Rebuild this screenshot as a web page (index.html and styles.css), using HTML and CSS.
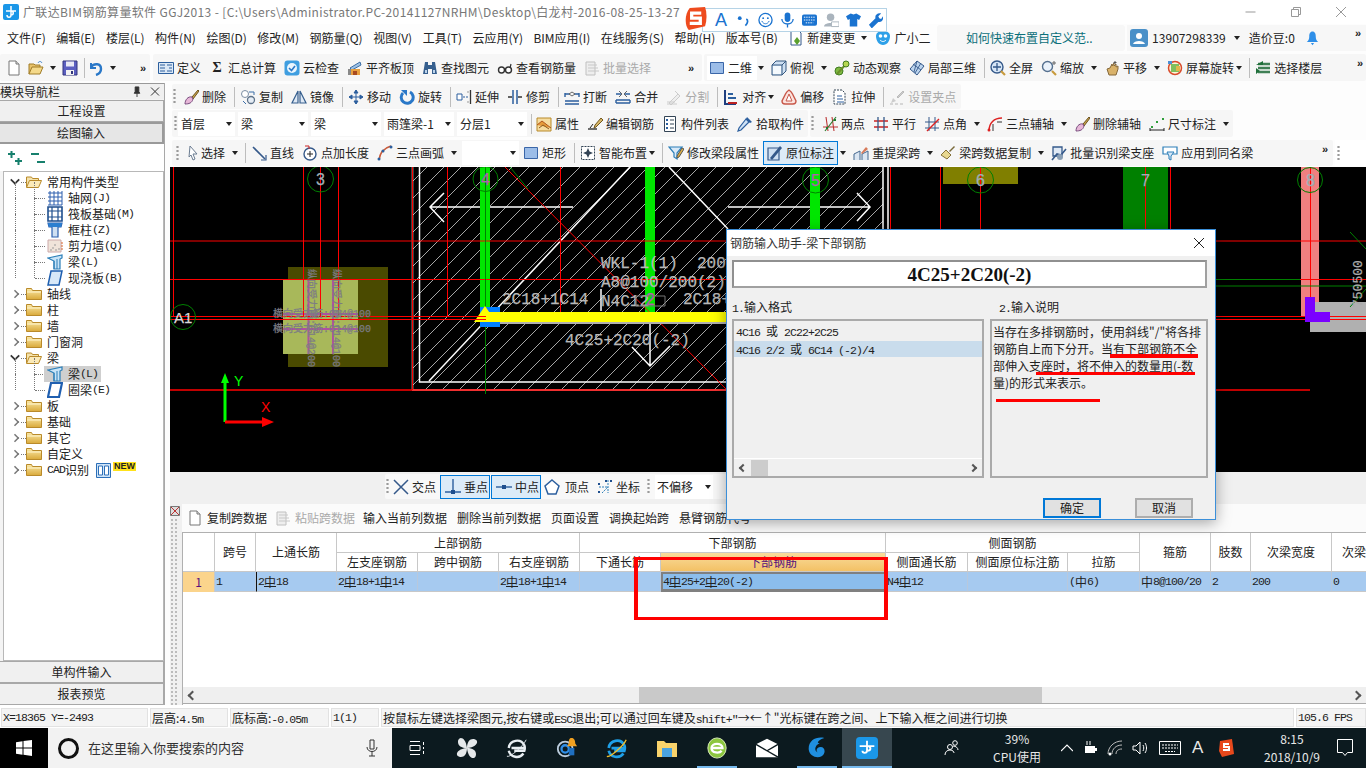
FILE: index.html
```html
<!DOCTYPE html>
<html lang="zh-CN">
<head>
<meta charset="utf-8">
<title>广联达BIM钢筋算量软件 GGJ2013</title>
<link rel="stylesheet" href="styles.css">
</head>
<body>
<svg class="defs" width="0" height="0">
<defs>
<linearGradient id="fg" x1="0" y1="0" x2="0" y2="1"><stop offset="0" stop-color="#fbe9a8"/><stop offset="1" stop-color="#d9a93a"/></linearGradient>
<pattern id="hatch" width="17" height="17" patternUnits="userSpaceOnUse"><path d="M-1 18L18 -1" stroke="#cfcfcf" stroke-width=".8"/><path d="M-1 1L1 -1M16 18L18 16" stroke="#cfcfcf" stroke-width=".8"/></pattern>
<symbol id="new" viewBox="0 0 16 16"><path d="M3 1h7l3 3v11H3z" fill="#fff" stroke="#777"/><path d="M10 1v3h3" fill="#ddd" stroke="#777"/></symbol>
<symbol id="open" viewBox="0 0 16 16"><path d="M1 14V4h5l1 1h5v2" fill="#e8c26a" stroke="#a07c28"/><path d="M1 14l3-7h11l-3 7z" fill="#f4d98a" stroke="#a07c28"/><path d="M10 3c1-2 3-2 4 0" fill="none" stroke="#3a80c8"/></symbol>
<symbol id="save" viewBox="0 0 16 16"><path d="M1 1h14v14H1z" fill="#5b5fc0" stroke="#33357c"/><path d="M4 1.500h8v5H4z" fill="#e8e8f4"/><path d="M4 10h8v5H4z" fill="#f2f2f2"/><path d="M9 11h2v3H9z" fill="#33357c"/></symbol>
<symbol id="undo" viewBox="0 0 16 16"><path d="M3 3v5h5" fill="none" stroke="#2a78c8" stroke-width="2"/><path d="M3 7c3-4 10-4 10 2 0 3-2 5-5 6" fill="none" stroke="#2a78c8" stroke-width="2.400"/></symbol>
<symbol id="def" viewBox="0 0 16 16"><path d="M.5 2.500h15v11H.5z" fill="#dbe8f6" stroke="#2c5f9e"/><path d="M2 5h5M2 8h5M2 11h5M9 5h5M11 8h3M9 11h5" stroke="#2c5f9e"/></symbol>
<symbol id="cloud" viewBox="0 0 16 16"><rect x=".5" y=".5" width="15" height="15" rx="3" fill="#3f9ee0"/><circle cx="8" cy="8" r="5" fill="#eaf5fd"/><path d="M5 8l2.500 2.500L11 6" fill="none" stroke="#2a78c8" stroke-width="1.600"/></symbol>
<symbol id="roof" viewBox="0 0 16 16"><path d="M3 8l10-6 1 3-9 5z" fill="#9fc2e4" stroke="#3a6da6"/><path d="M3 9h10v6H3z" fill="#e8a040"/><path d="M6 11h4v4H6z" fill="#a84a20"/><path d="M1 9h3v6H1z" fill="#888"/></symbol>
<symbol id="binoc" viewBox="0 0 16 16"><path d="M3 2h3v3h4V2h3l2 12h-5V9H6v5H1z" fill="#365f8e"/><path d="M3 10h2v3H3zM11 10h2v3h-2z" fill="#bcd3ea"/></symbol>
<symbol id="glass" viewBox="0 0 16 16"><circle cx="4.500" cy="10" r="3" fill="#fff" stroke="#333" stroke-width="1.400"/><circle cx="11.500" cy="10" r="3" fill="#fff" stroke="#333" stroke-width="1.400"/><path d="M7.500 10h1M13 8l1-4" stroke="#333" stroke-width="1.200"/></symbol>
<symbol id="batch" viewBox="0 0 16 16"><path d="M2 2h9v13H2z" fill="#eee" stroke="#c0c0c0"/><path d="M4 5h9M4 8h10M4 11h11" stroke="#c8c8c8"/></symbol>
<symbol id="rect" viewBox="0 0 16 16"><path d="M1.500 2.500h13v11h-13z" fill="#9cbde8" stroke="#3a66a8"/></symbol>
<symbol id="cube" viewBox="0 0 16 16"><path d="M1 5l4-4h10v10l-4 4H1z" fill="#cfe0f2" stroke="#33577f"/><path d="M1 5h10v10M11 5l4-4" fill="none" stroke="#33577f"/><path d="M2 6h8v8H2z" fill="#f4f9fd"/></symbol>
<symbol id="orbit" viewBox="0 0 16 16"><circle cx="5" cy="11" r="4" fill="#7fb842" stroke="#3f7b20"/><path d="M3 14L13 3" stroke="#6a8f2a" stroke-width="2"/><circle cx="12" cy="4" r="3" fill="#b6d651" stroke="#3f7b20"/></symbol>
<symbol id="part" viewBox="0 0 16 16"><path d="M8 1l7 5-7 9-7-6z" fill="#bcd4ee" stroke="#35598a"/><path d="M4 4l8 6M8 1l-3 11M12 3l-6 10" stroke="#35598a" stroke-width=".9"/></symbol>
<symbol id="full" viewBox="0 0 16 16"><circle cx="7" cy="7" r="6" fill="#d7e6f6" stroke="#35598a" stroke-width="1.400"/><path d="M7 3v8M3 7h8" stroke="#35598a" stroke-width="1.300"/><path d="M11 11l4 4" stroke="#c79a3c" stroke-width="2.200"/></symbol>
<symbol id="zoom" viewBox="0 0 16 16"><circle cx="6.500" cy="6.500" r="5" fill="#eaf2fb" stroke="#55708f" stroke-width="1.400"/><path d="M11 11l4 4" stroke="#c79a3c" stroke-width="2.200"/><path d="M13 1v4M11 3h4" stroke="#666"/></symbol>
<symbol id="hand" viewBox="0 0 16 16"><path d="M3 9l2 6h7l2-6V6l-2 1V4l-2 2V3L8 6V4L6 8z" fill="#d9b26a" stroke="#85683a"/><path d="M11 1v3M9.500 2.500h3" stroke="#555"/></symbol>
<symbol id="rot" viewBox="0 0 16 16"><circle cx="8" cy="8" r="6.500" fill="#fff6d8" stroke="#d84a2a" stroke-width="1.500"/><path d="M4 4h8v8H4z" fill="#7fbf5f"/><path d="M9 6h4v5H9z" fill="#e0b84c"/><path d="M1 1h4v3H1z" fill="#4a90d6"/></symbol>
<symbol id="floors" viewBox="0 0 16 16"><path d="M3 4h12M3 8h12M3 12h12" stroke="#3f7f55" stroke-width="2.400"/><path d="M8 1L1 5h7zM1 8v6l4-3z" fill="#1f6f3a"/></symbol>
<symbol id="erase" viewBox="0 0 16 16"><path d="M9 8l6-7 1 1-6 8z" fill="#c9a24a" stroke="#6b5320"/><path d="M2 15c0-4 3-8 7-7l1 2c-1 4-4 5-8 5z" fill="#e7b7d8" stroke="#7a4f80"/></symbol>
<symbol id="copy" viewBox="0 0 16 16"><circle cx="5" cy="5" r="3.500" fill="#fff" stroke="#7c8ea3"/><circle cx="11" cy="11" r="3.500" fill="#e6edf5" stroke="#5d7289" stroke-width="1.300"/><path d="M3 12l3 3M9 3h5v3" fill="none" stroke="#3b6ea8"/></symbol>
<symbol id="mirror" viewBox="0 0 16 16"><path d="M7 2L1 14h6zM9 2l6 12H9z" fill="#dfe9f5" stroke="#375f8e" stroke-width="1.200"/></symbol>
<symbol id="move" viewBox="0 0 16 16"><path d="M8 1v14M1 8h14M8 1L6 4h4zM8 15l-2-3h4zM1 8l3-2v4zM15 8l-3-2v4z" fill="#2c5f9e" stroke="#2c5f9e"/></symbol>
<symbol id="rotb" viewBox="0 0 16 16"><path d="M4 4a6 6 0 1 0 7-1" fill="none" stroke="#2a78c8" stroke-width="3"/><path d="M2 1h6v6z" fill="#2a78c8"/></symbol>
<symbol id="extend" viewBox="0 0 16 16"><path d="M14.500 1v14" stroke="#333" stroke-width="1.300"/><path d="M1 5h5v6H1z" fill="#fff" stroke="#2c5f9e"/><path d="M7 8h6" stroke="#2c5f9e" stroke-dasharray="2 1"/><path d="M11 3h2M11 13h2" stroke="#999"/></symbol>
<symbol id="trim" viewBox="0 0 16 16"><path d="M6 1v14M10 1v14" stroke="#2c5f9e" stroke-width="1.500"/><path d="M1 8h4M11 8h4" stroke="#333" stroke-width="1.500"/></symbol>
<symbol id="brk" viewBox="0 0 16 16"><path d="M1 8V4M15 8V4M1 12h14M1 5h5M10 5h5M1 15h14" fill="none" stroke="#2c5f9e" stroke-width="1.400"/><path d="M8 3L5 5l3 2M8 3l3 2-3 2" fill="none" stroke="#666"/></symbol>
<symbol id="merge" viewBox="0 0 16 16"><path d="M1 11h14M1 14h14M1 11v3M15 11v3M1 5h5M10 5h5" fill="none" stroke="#2c5f9e" stroke-width="1.400"/><path d="M4 2l3 3-3 3M12 2L9 5l3 3" fill="none" stroke="#666"/></symbol>
<symbol id="split" viewBox="0 0 16 16"><path d="M3 14l9-9 2 2-9 9z" fill="#eee" stroke="#ccc"/><path d="M1 13h8M1 15h10M9 2l5 5" stroke="#ccc"/></symbol>
<symbol id="align" viewBox="0 0 16 16"><path d="M2 1v14h11" fill="none" stroke="#1f3f7f" stroke-width="2"/><path d="M5 4h5v2H5zM5 8h8v2H5z" fill="#2c5f9e"/><path d="M5 13h9v2H5z" fill="#b22"/></symbol>
<symbol id="offset" viewBox="0 0 16 16"><path d="M8 1c3 2 3 3 4 5l3 6c0 2-1 3-3 3H4c-2 0-3-1-3-3l3-6c1-2 1-3 4-5z" fill="#fbe4e0" stroke="#c8584a" stroke-width="1.400"/><path d="M8 5l3 7H5z" fill="#fff" stroke="#c8584a"/></symbol>
<symbol id="stretch" viewBox="0 0 16 16"><path d="M2 1h8l3 3v11H2z" fill="#fff" stroke="#345" stroke-dasharray="2 1"/><path d="M5 7h5M5 10h6M5 13h7" stroke="#2c5f9e"/></symbol>
<symbol id="pick" viewBox="0 0 16 16"><path d="M2 14l2-5 3 3-5 2z" fill="#ccc"/><path d="M8 8l6-6 1 1-6 6z" fill="#ccc" stroke="#bbb"/><path d="M1 15h14" stroke="#ccc" stroke-dasharray="3 2" stroke-width="1.600"/></symbol>
<symbol id="prop" viewBox="0 0 16 16"><path d="M1 2h14v13H1z" fill="#f6dca0" stroke="#b88a2a"/><path d="M1 9l5-4 9 7" fill="#e59a3a" stroke="#b0561e"/><path d="M3 12l4-3 6 4" fill="none" stroke="#8a5a20"/></symbol>
<symbol id="edit" viewBox="0 0 16 16"><path d="M8 9l6-7 2 2-7 7-2 1z" fill="#d8b76a" stroke="#71581e"/><path d="M1 13h9" stroke="#222" stroke-width="1.300"/><path d="M3 12l3-4" stroke="#222"/></symbol>
<symbol id="list" viewBox="0 0 16 16"><path d="M2.500.5h11v15h-11z" fill="#fff" stroke="#345"/><path d="M4 3h2v2H4zM4 7h2v2H4zM4 11h2v2H4z" fill="#2c5f9e"/><path d="M8 4h4M8 8h4M8 12h4" stroke="#345"/></symbol>
<symbol id="dropper" viewBox="0 0 16 16"><path d="M9 3L2 12l-1 3 3-1 8-8z" fill="#cfe2f6" stroke="#2c5f9e" stroke-width="1.200"/><path d="M10 1l5 5-2 1-4-4z" fill="#2c5f9e"/></symbol>
<symbol id="two" viewBox="0 0 16 16"><path d="M1 11h15M4 1l2 14M10 1l2 14" stroke="#b33" stroke-width="1.100"/><path d="M3 15L14 1" stroke="#2e7d32" stroke-width="1.200"/><path d="M4 11h2v2H4zM12 3h2v2h-2z" fill="#1f7f2f"/></symbol>
<symbol id="para" viewBox="0 0 16 16"><path d="M1 5h14M1 11h14" stroke="#c22" stroke-width="1.300"/><path d="M5 1v14M11 1v14" stroke="#35598a" stroke-width="1.300"/></symbol>
<symbol id="angle" viewBox="0 0 16 16"><path d="M1 6h14M1 12h14M5 1v14M11 1v14" stroke="#35598a"/><path d="M3 15L15 3" stroke="#d22" stroke-width="1.500"/></symbol>
<symbol id="arcax" viewBox="0 0 16 16"><path d="M2 15C2 7 7 2 15 2" fill="none" stroke="#d22" stroke-width="1.500"/><path d="M6 15V8M10 6h5" stroke="#333"/><circle cx="2" cy="14" r="1.500" fill="#d22"/></symbol>
<symbol id="dim" viewBox="0 0 16 16"><path d="M1 12v3M15 12v3M1 14h14" stroke="#222"/><path d="M2 10h2v2H2zM13 2h2v2h-2zM7 5h2v2H7z" fill="#2e9e3a"/></symbol>
<symbol id="cursor" viewBox="0 0 16 16"><path d="M5 1l7 8H8l2 5-2 1-2-5-2 2z" fill="#fff" stroke="#6b7c91"/></symbol>
<symbol id="line" viewBox="0 0 16 16"><path d="M2 2l12 12" stroke="#35598a" stroke-width="1.600"/><path d="M10 15h5v-5" fill="none" stroke="#35598a" stroke-width="1.200"/></symbol>
<symbol id="plus" viewBox="0 0 16 16"><circle cx="8" cy="9" r="6" fill="#fff" stroke="#35598a" stroke-width="1.400"/><path d="M8 6v6M5 9h6" stroke="#222"/><path d="M3 1h4v3" fill="none" stroke="#c22"/></symbol>
<symbol id="arc" viewBox="0 0 16 16"><path d="M2 15C3 7 7 3 14 1" fill="none" stroke="#c85a3a" stroke-width="1.600"/><circle cx="2" cy="14" r="1.500" fill="#2c5f9e"/><circle cx="6" cy="6" r="1.500" fill="#2c5f9e"/><circle cx="14" cy="2" r="1.500" fill="#2c5f9e"/></symbol>
<symbol id="smart" viewBox="0 0 16 16"><path d="M1.500 1.500h13v13h-13z" fill="#fff" stroke="#345" stroke-dasharray="2 1"/><path d="M8 3l1.500 3.500L13 8l-3.500 1.500L8 13l-1.500-3.500L3 8l3.500-1.500z" fill="#345"/></symbol>
<symbol id="modify" viewBox="0 0 16 16"><path d="M1 2h13L9 8v6l-3-2V8z" fill="#d8e9f8" stroke="#2c7fb8" stroke-width="1.200"/><path d="M9 11l5-8 2 1-5 8-2 1z" fill="#e0b040" stroke="#555"/></symbol>
<symbol id="anno" viewBox="0 0 16 16"><path d="M1 3h11v12H1z" fill="#cfe0f2" stroke="#35598a" stroke-width="1.200"/><path d="M3 13L13 1l2 2L5 15z" fill="#35598a"/></symbol>
<symbol id="retr" viewBox="0 0 16 16"><path d="M1 15V9l6-3v9M9 15V9l6-3v9" fill="#dbe6f2" stroke="#45688f"/><path d="M8 8l5-6 2 2-6 5z" fill="#d77a5a"/></symbol>
<symbol id="dup" viewBox="0 0 16 16"><path d="M1 10l5-5 5 5-4 4z" fill="#e8d890" stroke="#86723a"/><path d="M9 6l5-5 1 1-5 5z" fill="#7a6a3a"/></symbol>
<symbol id="bid" viewBox="0 0 16 16"><path d="M2 2h9v9H2z" fill="#dfe9f5" stroke="#35598a" stroke-width="1.300"/><path d="M1 15l5-6 4 1 5-6" stroke="#35598a" stroke-width="1.600" fill="none"/><circle cx="9" cy="12" r="3" fill="#8a9fb5"/></symbol>
<symbol id="apply" viewBox="0 0 16 16"><path d="M1 2h14v7H1z" fill="#fff" stroke="#2c7fb8" stroke-width="1.200"/><path d="M5 7h7l-3 4v4l-2-1v-3z" fill="#d8e9f8" stroke="#2c7fb8"/></symbol>
<symbol id="xp" viewBox="0 0 16 16"><path d="M1 1l14 14M15 1L1 15" stroke="#35598a" stroke-width="1.500"/></symbol>
<symbol id="perp" viewBox="0 0 16 16"><path d="M8 0v12M0 13h16" stroke="#2c5f9e" stroke-width="1.400"/><path d="M6 11h4v4H6z" fill="#1f4f8e"/></symbol>
<symbol id="mid" viewBox="0 0 16 16"><path d="M0 8h16" stroke="#2c5f9e" stroke-width="1.400"/><path d="M6 6h4v4H6z" fill="#1f4f8e"/></symbol>
<symbol id="vert" viewBox="0 0 16 16"><path d="M8 1l7 6-3 8H4L1 7z" fill="#fff" stroke="#2c5f9e" stroke-width="1.500"/></symbol>
<symbol id="coord" viewBox="0 0 16 16"><path d="M2 8h9M11 1v13M5 14l6-6" stroke="#2c7fb8" stroke-dasharray="2 1"/><path d="M1 4h2v2H1zM1 12h2v2H1zM13 1h2v2h-2zM8 1h2v2H8z" fill="#1f4f8e"/></symbol>
<symbol id="gridt" viewBox="0 0 16 16"><path d="M1 3h14M1 7h14M1 11h14M1 15h14M3 1v14M7 1v14M11 1v14M15 1v14" stroke="#2c5fae"/></symbol>
<symbol id="raft" viewBox="0 0 16 16"><path d="M1 1h14v14H1z" fill="#fff" stroke="#1f4f8e" stroke-width="1.600"/><path d="M1 5h14M1 11h14M5 1v14M11 1v14" stroke="#1f4f8e" stroke-width="1.200"/></symbol>
<symbol id="col" viewBox="0 0 16 16"><path d="M1 1h14l-1 4h-3v10H5V5H2z" fill="#cfe0f2" stroke="#2c5fae" stroke-width="1.200"/><path d="M1 1h14l-1 4H2z" fill="#2c7fd0"/></symbol>
<symbol id="wall" viewBox="0 0 16 16"><path d="M1 2h13v12H1z" fill="#f0e4da" stroke="#caa"/><path d="M3 12h2M5 10h2M8 12h2M7 7h2M11 11h2" stroke="#999"/><path d="M14 5h2M14 8h2M14 11h2" stroke="#d8652a"/></symbol>
<symbol id="beam" viewBox="0 0 16 16"><path d="M1 4l14-3v3l-2 1v10H7V7z" fill="#c8e4f8" stroke="#2c7fb8" stroke-width="1.200"/><path d="M7 7v8M10 5v10" stroke="#2c7fb8"/></symbol>
<symbol id="slab" viewBox="0 0 16 16"><path d="M4 1h11l-3 14H1z" fill="#d7e8f8" stroke="#1f5fb0" stroke-width="1.500"/></symbol>
<symbol id="ring" viewBox="0 0 16 16"><path d="M4 1h11l-3 14H1z" fill="#fff" stroke="#1f5fb0" stroke-width="2.200"/></symbol>
<symbol id="fold" viewBox="0 0 16 16"><path d="M.5 13.500v-11h5l1 2h9v9z" fill="url(#fg)" stroke="#b98a2a"/><path d="M1 6h14" stroke="#fff6d0"/></symbol>
<symbol id="fopen" viewBox="0 0 16 16"><path d="M.5 13V3h5l1 1.500h6V7" fill="#f4e2ac" stroke="#b98a2a"/><path d="M.5 13.500l3-7h12l-3 7z" fill="#fbeab8" stroke="#b98a2a"/></symbol>
<symbol id="e" viewBox="0 0 24 24"><path d="M3 12a9 9 0 0 1 17-3 9 9 0 0 1 0 6H9m-3-3h14M19 18a9 9 0 0 1-16-3" fill="none" stroke="#e8eef2" stroke-width="2.600"/><path d="M1 21c3 2 18-11 21-18" fill="none" stroke="#e8eef2"/></symbol>
</defs>
</svg>

<div class="app">
  <header class="titlebar">
    <svg class="logo" viewBox="0 0 16 16"><rect width="16" height="16" rx="2" fill="#1b97e8"/><path d="M8 2v9c0 3-4 3-4 0M3 7h10M8 7c3 0 3 4 0 4" fill="none" stroke="#fff" stroke-width="1.500"/></svg>
    <span class="apptitle">广联达BIM钢筋算量软件 GGJ2013 - [C:\Users\Administrator.PC-20141127NRHM\Desktop\白龙村-2016-08-25-13-27</span>
    <div class="winctl">
      <svg viewBox="0 0 10 10"><path d="M0 5h10" stroke="#999"/></svg>
      <svg viewBox="0 0 10 10"><path d="M.5 2.500h7v7h-7zM2.500 2.500v-2h7v7h-2" fill="none" stroke="#999"/></svg>
      <svg viewBox="0 0 10 10"><path d="M0 0l10 10M10 0L0 10" stroke="#999"/></svg>
    </div>
  </header>

  <div class="menubar">
    <nav class="menus">
      <span>文件(F)</span><span>编辑(E)</span><span>楼层(L)</span><span>构件(N)</span><span>绘图(D)</span><span>修改(M)</span><span>钢筋量(Q)</span><span>视图(V)</span><span>工具(T)</span><span>云应用(Y)</span><span>BIM应用(I)</span><span>在线服务(S)</span><span>帮助(H)</span><span>版本号(B)</span>
      <span class="tool"><svg class="ic" viewBox="0 0 16 16"><path d="M3 1h8l2 2v12H3z" fill="#fff" stroke="#35598a"/><path d="M6 11l3-4 3 4-3 4z" fill="#5aa02c"/></svg>新建变更</span>
      <i class="caret"></i>
      <span class="tool"><svg class="ic" viewBox="0 0 16 16"><path d="M1 6c0-4 4-5 7-5s7 1 7 5c0 5-3 9-7 9S1 11 1 6z" fill="#2ea0e8"/><circle cx="5.500" cy="6" r="1.800" fill="#fff"/><circle cx="10.500" cy="6" r="1.800" fill="#fff"/><path d="M5 10c2 2 4 2 6 0" stroke="#fff" fill="none"/></svg>广小二</span>
    </nav>
    <div class="hint">如何快速布置自定义范..</div>
    <div class="userbox">
      <svg class="ic big" viewBox="0 0 18 18"><rect width="18" height="18" rx="3" fill="#4a90c8"/><circle cx="9" cy="7" r="3" fill="#fff"/><path d="M3 15c1-4 11-4 12 0z" fill="#fff"/></svg>
      <span class="num">13907298339</span><i class="caret"></i><span>造价豆:0</span>
      <svg class="ic bell" viewBox="0 0 16 18"><path d="M8 1c3 0 4 3 4 6 0 3 1 5 3 7H1c2-2 3-4 3-7 0-3 1-6 4-6z" fill="#2f8fe8"/><path d="M6 15h4l-2 3z" fill="#2f8fe8"/></svg>
      <b class="more">»</b>
    </div>
  </div>

  <div class="row row2">
    <div class="strip s-file">
      <svg class="ic"><use href="#new"/></svg><svg class="ic"><use href="#open"/></svg><i class="caret"></i><svg class="ic"><use href="#save"/></svg><i class="sep"></i><svg class="ic"><use href="#undo"/></svg><i class="caret"></i><b class="more">»</b>
    </div>
    <div class="strip s-main">
      <span class="tool"><svg class="ic"><use href="#def"/></svg>定义</span>
      <span class="tool"><b class="sigma">Σ</b>汇总计算</span>
      <span class="tool"><svg class="ic"><use href="#cloud"/></svg>云检查</span>
      <span class="tool"><svg class="ic"><use href="#roof"/></svg>平齐板顶</span>
      <span class="tool"><svg class="ic"><use href="#binoc"/></svg>查找图元</span>
      <span class="tool"><svg class="ic"><use href="#glass"/></svg>查看钢筋量</span>
      <span class="tool off"><svg class="ic"><use href="#batch"/></svg>批量选择</span>
      <b class="more">»</b>
    </div>
    <div class="strip s-view">
      <span class="tool whitebox"><svg class="ic"><use href="#rect"/></svg>二维</span><i class="caret"></i>
      <span class="tool"><svg class="ic"><use href="#cube"/></svg>俯视</span><i class="caret"></i>
      <span class="tool"><svg class="ic"><use href="#orbit"/></svg>动态观察</span>
      <span class="tool"><svg class="ic"><use href="#part"/></svg>局部三维</span><i class="sep"></i>
      <span class="tool"><svg class="ic"><use href="#full"/></svg>全屏</span>
      <span class="tool"><svg class="ic"><use href="#zoom"/></svg>缩放</span><i class="caret"></i>
      <span class="tool"><svg class="ic"><use href="#hand"/></svg>平移</span><i class="caret"></i>
      <span class="tool"><svg class="ic"><use href="#rot"/></svg>屏幕旋转</span><i class="caret tight"></i><i class="sep"></i>
      <span class="tool"><svg class="ic"><use href="#floors"/></svg>选择楼层</span>
      <b class="more end">»</b>
    </div>
  </div>

  <div class="work">
    <aside class="nav">
      <div class="navhead"><span>模块导航栏</span>
        <svg viewBox="0 0 10 12"><path d="M3 1h4v5l1 2H2l1-2zM5 8v4" fill="#333" stroke="#333"/></svg>
        <svg viewBox="0 0 10 10"><path d="M1 1l8 8M9 1L1 9" stroke="#333"/></svg>
      </div>
      <button class="navbtn">工程设置</button>
      <button class="navbtn pressed">绘图输入</button>
      <div class="treetools">
        <svg viewBox="0 0 16 16"><path d="M1 4h7M4.500 1v7" stroke="#17806d" stroke-width="2"/><path d="M8 11h7M11.500 8v7" stroke="#17806d" stroke-width="2"/></svg>
        <svg viewBox="0 0 16 16"><path d="M1 4h8" stroke="#17806d" stroke-width="2"/><path d="M7 12h8" stroke="#17806d" stroke-width="2"/></svg>
      </div>
      <ul class="tree">
        <li class="rt"><i class="chev down"></i><i class="dash"></i><svg class="ic"><use href="#fopen"/></svg>常用构件类型</li>
        <li class="kid"><i class="dash"></i><svg class="ic"><use href="#gridt"/></svg>轴网<span class="m">(J)</span></li>
        <li class="kid"><i class="dash"></i><svg class="ic"><use href="#raft"/></svg>筏板基础<span class="m">(M)</span></li>
        <li class="kid"><i class="dash"></i><svg class="ic"><use href="#col"/></svg>框柱<span class="m">(Z)</span></li>
        <li class="kid"><i class="dash"></i><svg class="ic"><use href="#wall"/></svg>剪力墙<span class="m">(Q)</span></li>
        <li class="kid"><i class="dash"></i><svg class="ic"><use href="#beam"/></svg>梁<span class="m">(L)</span></li>
        <li class="kid"><i class="dash"></i><svg class="ic"><use href="#slab"/></svg>现浇板<span class="m">(B)</span></li>
        <li class="rt"><i class="chev"></i><i class="dash"></i><svg class="ic"><use href="#fold"/></svg>轴线</li>
        <li class="rt"><i class="chev"></i><i class="dash"></i><svg class="ic"><use href="#fold"/></svg>柱</li>
        <li class="rt"><i class="chev"></i><i class="dash"></i><svg class="ic"><use href="#fold"/></svg>墙</li>
        <li class="rt"><i class="chev"></i><i class="dash"></i><svg class="ic"><use href="#fold"/></svg>门窗洞</li>
        <li class="rt"><i class="chev down"></i><i class="dash"></i><svg class="ic"><use href="#fopen"/></svg>梁</li>
        <li class="kid"><i class="dash"></i><span class="sel"><svg class="ic"><use href="#beam"/></svg>梁<span class="m">(L)</span></span></li>
        <li class="kid"><i class="dash"></i><svg class="ic"><use href="#ring"/></svg>圈梁<span class="m">(E)</span></li>
        <li class="rt"><i class="chev"></i><i class="dash"></i><svg class="ic"><use href="#fold"/></svg>板</li>
        <li class="rt"><i class="chev"></i><i class="dash"></i><svg class="ic"><use href="#fold"/></svg>基础</li>
        <li class="rt"><i class="chev"></i><i class="dash"></i><svg class="ic"><use href="#fold"/></svg>其它</li>
        <li class="rt"><i class="chev"></i><i class="dash"></i><svg class="ic"><use href="#fold"/></svg>自定义</li>
        <li class="rt"><i class="chev"></i><i class="dash"></i><svg class="ic"><use href="#fold"/></svg><span class="m">CAD</span>识别<svg class="cadic" viewBox="0 0 15 15"><path d="M.5.500h14v14H.5z" fill="#cfe4f8" stroke="#2c6fb8"/><path d="M2.500 3h4v9h-4zM8.500 3h4v9h-4z" fill="#fff" stroke="#2c6fb8"/></svg><b class="newtag">NEW</b></li>
      </ul>
      <button class="navbtn">单构件输入</button>
      <button class="navbtn">报表预览</button>
    </aside>

    <main class="mainpane">
      <div class="row row3">
        <div class="strip s-edit">
          <i class="grip"></i>
          <span class="tool"><svg class="ic"><use href="#erase"/></svg>删除</span><i class="sep"></i>
          <span class="tool"><svg class="ic"><use href="#copy"/></svg>复制</span>
          <span class="tool"><svg class="ic"><use href="#mirror"/></svg>镜像</span><i class="sep"></i>
          <span class="tool"><svg class="ic"><use href="#move"/></svg>移动</span>
          <span class="tool"><svg class="ic"><use href="#rotb"/></svg>旋转</span><i class="sep"></i>
          <span class="tool"><svg class="ic"><use href="#extend"/></svg>延伸</span>
          <span class="tool"><svg class="ic"><use href="#trim"/></svg>修剪</span><i class="sep"></i>
          <span class="tool"><svg class="ic"><use href="#brk"/></svg>打断</span>
          <span class="tool"><svg class="ic"><use href="#merge"/></svg>合并</span>
          <span class="tool off"><svg class="ic"><use href="#split"/></svg>分割</span><i class="sep"></i>
          <span class="tool"><svg class="ic"><use href="#align"/></svg>对齐</span><i class="caret tight"></i>
          <span class="tool"><svg class="ic"><use href="#offset"/></svg>偏移</span>
          <span class="tool"><svg class="ic"><use href="#stretch"/></svg>拉伸</span><i class="sep"></i>
          <span class="tool off"><svg class="ic"><use href="#pick"/></svg>设置夹点</span>
        </div>
      </div>

      <div class="row row4">
        <div class="strip s-comp">
          <i class="grip"></i>
          <span class="combo w57">首层<i class="caret"></i></span>
          <span class="combo">梁<i class="caret"></i></span>
          <span class="combo">梁<i class="caret"></i></span>
          <span class="combo">雨篷梁-1<i class="caret"></i></span>
          <span class="combo">分层1<i class="caret"></i></span>
          <i class="sep"></i>
          <span class="tool"><svg class="ic"><use href="#prop"/></svg>属性</span>
          <span class="tool"><svg class="ic"><use href="#edit"/></svg>编辑钢筋</span>
          <span class="tool"><svg class="ic"><use href="#list"/></svg>构件列表</span>
          <span class="tool"><svg class="ic"><use href="#dropper"/></svg>拾取构件</span>
        </div>
        <div class="strip s-axis">
          <i class="grip"></i>
          <span class="tool"><svg class="ic"><use href="#two"/></svg>两点</span>
          <span class="tool"><svg class="ic"><use href="#para"/></svg>平行</span>
          <span class="tool"><svg class="ic"><use href="#angle"/></svg>点角</span><i class="caret"></i>
          <span class="tool"><svg class="ic"><use href="#arcax"/></svg>三点辅轴</span><i class="caret"></i>
          <span class="tool"><svg class="ic"><use href="#erase"/></svg>删除辅轴</span>
          <span class="tool"><svg class="ic"><use href="#dim"/></svg>尺寸标注</span><i class="caret"></i>
        </div>
      </div>

      <div class="row row5">
        <div class="strip s-draw">
          <i class="grip"></i>
          <span class="tool"><svg class="ic"><use href="#cursor"/></svg>选择</span><i class="caret"></i><i class="sep"></i>
          <span class="tool"><svg class="ic"><use href="#line"/></svg>直线</span>
          <span class="tool"><svg class="ic"><use href="#plus"/></svg>点加长度</span>
          <span class="tool"><svg class="ic"><use href="#arc"/></svg>三点画弧</span><i class="caret"></i>
          <span class="combo blank"><i class="caret"></i></span>
          <span class="tool"><svg class="ic"><use href="#rect"/></svg>矩形</span><i class="sep"></i>
          <span class="tool"><svg class="ic"><use href="#smart"/></svg>智能布置</span><i class="caret tight"></i><i class="sep"></i>
          <span class="tool"><svg class="ic"><use href="#modify"/></svg>修改梁段属性</span>
          <span class="tool on a1"><svg class="ic"><use href="#anno"/></svg>原位标注</span><i class="caret"></i>
          <span class="tool"><svg class="ic"><use href="#retr"/></svg>重提梁跨</span><i class="caret"></i>
          <span class="tool"><svg class="ic"><use href="#dup"/></svg>梁跨数据复制</span><i class="caret"></i>
          <span class="tool"><svg class="ic"><use href="#bid"/></svg>批量识别梁支座</span>
          <span class="tool"><svg class="ic"><use href="#apply"/></svg>应用到同名梁</span>
          <b class="more end">»</b>
        </div>
        <div class="tailgrip"><i class="grip"></i></div>
      </div>

      <svg class="cad" viewBox="170 168 1196 305" width="1196" height="305" role="img" aria-label="梁平面图">
        <rect x="170" y="168" width="1196" height="305" fill="#000"/>
        <rect x="412" y="168" width="471" height="223" fill="url(#hatch)"/>
        <g fill="none" stroke="#fff">
          <path d="M412.500 168v223M419.500 168v215H883" stroke-width="1.500"/>
          <path d="M412 391h476M883 168v223M888 168v223" stroke-width="1.500"/>
          <path d="M429 382L630 168M669 168L728 230" stroke-width="1.500"/>
          <path d="M430 208H573M444 194L430 208L444 223M728 208H870M857 194L870 208L857 222" stroke-width="1.500"/>
          <path d="M650 320V367M632 348L650 367L670 347M601 290V312" stroke-width="1.500"/>
        </g>
        <rect x="480" y="168" width="10" height="142" fill="#00e600"/>
        <rect x="645" y="168" width="10" height="145" fill="#00e600"/>
        <rect x="810" y="168" width="10" height="62" fill="#00e600"/>
        <rect x="943" y="168" width="75" height="17" fill="#807f00"/>
        <rect x="1123" y="168" width="45" height="62" fill="#008000"/>
        <rect x="1301" y="168" width="18" height="150" fill="#f08080"/>
        <rect x="1310" y="303" width="56" height="30" fill="#b0b0b0"/>
        <rect x="288" y="268" width="100" height="100" fill="#4a4a00"/>
        <rect x="283" y="281" width="75" height="74" fill="#a8b85a"/>
        <g stroke="#b050a0" stroke-width="2"><path d="M308.500 281v74M333 281v74M283 315h75M283 330h75"/></g>
        <g stroke="#f00" fill="none">
          <path d="M170 242H730M1216 242H1366M170 280.500H730M1216 280.500H1366M170 317.500H730M1216 317.500H1366M170 320.500H500M1216 320.500H1366"/>
          <path d="M173.500 168V317M303.500 168V318M320.500 168V318M338.500 168V318M412.500 168V391M447.500 168V317M560.500 168V313M890.500 168V230M940.500 168V230M980.500 168V230M1145.500 168V230M1170.500 168V230M1310.500 168V318"/>
          <path d="M505 168L727 391"/>
          <path d="M170 391H730M1216 391H1310" stroke-width="1.600"/>
        </g>
        <g stroke="#008000" fill="none">
          <path d="M485.500 168V395M510 168L528 190"/>
          <path d="M1216 287H1366M1216 280.500H1300M1350 233L1366 250M1366 290L1350 308"/>
          <circle cx="320.500" cy="180" r="13"/><circle cx="183" cy="318" r="12.500"/><circle cx="485.500" cy="180" r="12.500"/><circle cx="815.500" cy="181" r="13"/><circle cx="980.500" cy="181" r="13"/><circle cx="1310" cy="181" r="12.500"/>
        </g>
        <rect x="480" y="308" width="20" height="20" fill="#0080ff"/>
        <rect x="500" y="313" width="227" height="12" fill="#b0b0b0"/>
        <rect x="485" y="313" width="242" height="10" fill="#ff0"/>
        <path d="M485 307L474 323H496z" fill="#ff0"/>
        <path d="M470 317.500H486M470 320.500H486" stroke="#f00"/>
        <path d="M1305 298h10v15h15v10h-25z" fill="#7a00ff"/>
        <g class="cadtxt">
          <text x="601" y="269">WKL-1(1)&#160;&#160;200*</text>
          <text x="601" y="288">A8@100/200(2)</text>
          <text x="601" y="307">N4C12</text>
          <text x="502" y="305">2C18+1C14</text>
          <text x="683" y="305">2C18+</text>
          <text x="565" y="346">4C25+2C20(-2)</text>
          <text class="num" x="316" y="186">3</text>
          <text class="num pink" x="481" y="186">4</text>
          <text class="num pink" x="811" y="187">5</text>
          <text class="num" x="976" y="187">6</text>
          <text class="num" x="1141" y="187">7</text>
          <text class="num" x="1306" y="187">8</text>
          <text class="axisA" x="174" y="324">A1</text>
          <text class="num pink" x="646" y="306">2</text>
          <text class="sm" x="273" y="318">横向受力筋:C14@100</text>
          <text class="sm" x="273" y="333">横向受力筋:C14@100</text>
          <text class="sm" transform="rotate(90 308 270)" x="308" y="270">纵向受力筋:C14@200</text>
          <text class="sm" transform="rotate(90 333 270)" x="333" y="270">纵向受力筋:C14@100</text>
          <text class="vert" transform="rotate(-90 1362 308)" x="1362" y="308">750500</text>
        </g>
        <path d="M636 297h29v10h-29z" fill="none" stroke="#777"/>
        <path d="M225 382V423" stroke="#0f0" stroke-width="3"/><path d="M225 374L221 384H229z" fill="#0f0"/>
        <path d="M225 423H265" stroke="#f00" stroke-width="3"/><path d="M274 423L262 418V428z" fill="#f00"/>
        <text class="ax g" x="234" y="387">Y</text><text class="ax r" x="261" y="413">X</text>
      </svg>

      <div class="gutter">
        <div class="strip s-snap">
          <i class="grip"></i>
          <span class="tool"><svg class="ic"><use href="#xp"/></svg>交点</span>
          <span class="tool on"><svg class="ic"><use href="#perp"/></svg>垂点</span>
          <span class="tool on"><svg class="ic"><use href="#mid"/></svg>中点</span>
          <span class="tool"><svg class="ic"><use href="#vert"/></svg>顶点</span>
          <span class="tool"><svg class="ic"><use href="#coord"/></svg>坐标</span>
          <i class="grip"></i>
          <span class="combo snapc">不偏移<i class="caret"></i></span>
        </div>
      </div>

      <section class="gridpane">
        <aside class="griprail">
          <svg viewBox="0 0 10 10"><path d="M.5.500h9v9h-9z" fill="#ddd" stroke="#777"/><path d="M1 1l8 8M9 1L1 9" stroke="#b33"/></svg>
          <i class="railgrip"></i>
        </aside>
        <div class="gridbody">
          <div class="gridbar">
            <span class="tool"><svg class="ic"><use href="#new"/></svg>复制跨数据</span>
            <span class="tool off"><svg class="ic"><use href="#batch"/></svg>粘贴跨数据</span>
            <span class="plain">输入当前列数据</span>
            <span class="plain">删除当前列数据</span>
            <span class="plain">页面设置</span>
            <span class="plain">调换起始跨</span>
            <span class="plain">悬臂钢筋代号</span>
          </div>
          <div class="table">
            <div class="th r2"></div>
            <div class="th r2">跨号</div>
            <div class="th r2">上通长筋</div>
            <div class="th span3">上部钢筋</div>
            <div class="th span2">下部钢筋</div>
            <div class="th span3">侧面钢筋</div>
            <div class="th r2">箍筋</div>
            <div class="th r2">肢数</div>
            <div class="th r2">次梁宽度</div>
            <div class="th r2 clip">次梁</div>
            <div class="th">左支座钢筋</div>
            <div class="th">跨中钢筋</div>
            <div class="th">右支座钢筋</div>
            <div class="th">下通长筋</div>
            <div class="th hot">下部钢筋</div>
            <div class="th">侧面通长筋</div>
            <div class="th">侧面原位标注筋</div>
            <div class="th">拉筋</div>
            <div class="idx">1</div>
            <div class="td"><span class="m">1</span></div>
            <div class="td first"><span class="m">2</span><u>中</u><span class="m">18</span></div>
            <div class="td"><span class="m">2</span><u>中</u><span class="m">18+1</span><u>中</u><span class="m">14</span></div>
            <div class="td"></div>
            <div class="td"><span class="m">2</span><u>中</u><span class="m">18+1</span><u>中</u><span class="m">14</span></div>
            <div class="td"></div>
            <div class="td cur"><span class="m">4</span><u>中</u><span class="m">25+2</span><u>中</u><span class="m">20(-2)</span></div>
            <div class="td"><span class="m">N4</span><u>中</u><span class="m">12</span></div>
            <div class="td"></div>
            <div class="td"><span class="m">(</span>中<span class="m">6)</span></div>
            <div class="td">中<span class="m">8@100/20</span></div>
            <div class="td"><span class="m">2</span></div>
            <div class="td"><span class="m">200</span></div>
            <div class="td"><span class="m">0</span></div>
          </div>
          <div class="hscroll"><i class="ch l"></i><i class="thumb"></i><i class="ch r"></i></div>
          <div class="redbox"></div>
        </div>
      </section>
    </main>
  </div>

  <footer class="status">
    <span class="cell st1 m">X=18365 Y=-2493</span>
    <span class="cell st2">层高:<span class="m">4.5m</span></span>
    <span class="cell st3">底标高:<span class="m">-0.05m</span></span>
    <span class="cell st4 m">1(1)</span>
    <span class="cell st5">按鼠标左键选择梁图元,按右键或<span class="m">ESC</span>退出;可以通过回车键及<span class="m">shift+"</span>→←↑"光标键在跨之间、上下输入框之间进行切换</span>
    <span class="cell st6 m">105.6 FPS</span>
  </footer>

  <div class="taskbar">
    <div class="start"><svg viewBox="0 0 16 16"><path d="M0 2.300l6.500-1v6.200H0zM7.500 1.100L16 0v7.500H7.500zM0 8.500h6.500v6.200l-6.500-1zM7.500 8.500H16V16l-8.500-1.200z" fill="#fff"/></svg></div>
    <div class="search"><i class="cortana"></i><span>在这里输入你要搜索的内容</span>
      <svg class="micro" viewBox="0 0 12 18"><path d="M4 1h4v9H4z" fill="none" stroke="#333"/><path d="M1 8c0 6 10 6 10 0M6 13v4M3 17h6" fill="none" stroke="#333"/></svg></div>
    <div class="tb tv"><svg viewBox="0 0 16 16"><path d="M1 5.500h10v5H1zM1 1.500h10M1 14.500h10M14.500 2v3M14.500 7v2M14.500 11v3" fill="none" stroke="#fff"/></svg></div>
    <div class="tb"><svg viewBox="0 0 20 20"><path d="M10 10C4 10 1 7 2 3s7-3 8 7zM10 10c6 0 9 3 8 7s-7 3-8-7zM10 10c0-6 3-9 7-8s3 7-7 8zM10 10c0 6-3 9-7 8s-3-7 7-8z" fill="#e5e8ea"/></svg></div>
    <div class="tb"><svg><use href="#e"/></svg></div>
    <div class="tb"><svg viewBox="0 0 24 24"><circle cx="10" cy="13" r="8" fill="none" stroke="#bcd" stroke-width="2"/><circle cx="10" cy="13" r="4" fill="none" stroke="#2f8fe8" stroke-width="2.500"/><path d="M14 12h6v8h-6z" fill="#1f6fc0"/><path d="M17 1c3 0 4 3 4 6l2 3H12l2-3c0-3 0-6 3-6z" fill="#f0a020"/></svg></div>
    <div class="tb"><svg viewBox="0 0 24 24"><path d="M3 12a9 9 0 0 1 17-3 9 9 0 0 1 0 6H9m-3-3h14M19 18a9 9 0 0 1-16-3" fill="none" stroke="#1fa0e8" stroke-width="3"/><path d="M1 21c3 2 18-11 21-18" fill="none" stroke="#f0c030" stroke-width="1.500"/></svg></div>
    <div class="tb"><svg viewBox="0 0 22 20"><path d="M1 3h7l2 2h11v14H1z" fill="#f9d36b"/><path d="M6 10h10v9H6z" fill="#4aa3e0"/></svg></div>
    <div class="tb u"><svg viewBox="0 0 24 24"><ellipse cx="12" cy="12" rx="10" ry="11" fill="#8cc63f" stroke="#dff0c0"/><path d="M6 12h12c0-6-12-6-12 0 0 6 9 6 11 3" fill="none" stroke="#fff" stroke-width="2.500"/></svg></div>
    <div class="tb"><svg viewBox="0 0 24 20"><path d="M0 6l12-6 12 6v14H0z" fill="#fff"/><path d="M0 6l12 7 12-7M12 13L24 20" fill="none" stroke="#0d1a1f" stroke-width="1.500"/></svg></div>
    <div class="tb u"><svg viewBox="0 0 24 24"><path d="M20 1c-9-2-18 3-17 13 1 7 9 10 14 7 5-3 4-10-1-10-4 0-6 4-3 6-5-2-3-9 2-10-4 0-2-4 5-6z" fill="#1f8fe0"/></svg></div>
    <div class="tb active"><svg viewBox="0 0 24 24"><rect x="0" y="0" width="24" height="24" rx="4" fill="#1b97e8"/><path d="M12 4v11c0 3-5 3-5 0M4 10h16M12 10c5 0 5 5 0 5" fill="none" stroke="#fff" stroke-width="2"/></svg></div>
    <div class="tray">
      <svg class="t-p" viewBox="0 0 16 16"><circle cx="6" cy="7" r="2.500" fill="none" stroke="#fff"/><circle cx="11" cy="3" r="2.300" fill="none" stroke="#fff"/><path d="M1 15c0-3 2-5 5-5s4 2 4 3M9 6c3 0 5 2 5 4" fill="none" stroke="#fff"/></svg>
      <div class="cpu">39%<br>CPU使用</div>
      <svg class="t-c" viewBox="0 0 12 8"><path d="M0 7l6-6 6 6" fill="none" stroke="#fff" stroke-width="1.200"/></svg>
      <svg class="t-i" viewBox="0 0 16 16"><path d="M3 6h10v7H3z" fill="#fff"/><path d="M13 8h2v3h-2z" fill="#fff"/><path d="M5 1v4M8 1v4" stroke="#fff"/></svg>
      <svg class="t-i" viewBox="0 0 16 16"><path d="M1 14c0-7 6-13 14-13M5 14c0-5 4-9 10-9M9 14c0-3 2-5 6-5" fill="none" stroke="#bbb"/><circle cx="3" cy="14" r="1.500" fill="#fff"/></svg>
      <svg class="t-i" viewBox="0 0 16 16"><path d="M1 6h3l4-4v12l-4-4H1z" fill="none" stroke="#fff"/><path d="M11 5c1 2 1 4 0 6M13 3c2 3 2 7 0 10" fill="none" stroke="#fff"/></svg>
      <svg class="t-k" viewBox="0 0 22 14"><path d="M.5.500h21v13H.5z" fill="none" stroke="#fff"/><path d="M3 4h16M3 7h16M6 10.500h10" stroke="#fff" stroke-dasharray="2 1"/></svg>
      <span class="ime">A</span>
      <svg class="t-s" viewBox="0 0 16 18"><path d="M2 2l12-2 2 15-12 3-3-6z" fill="#e8491c"/><path d="M11 5H6v3h5v3H5" fill="none" stroke="#fff" stroke-width="2"/></svg>
      <div class="clock">8:15<br>2018/10/9</div>
      <svg class="t-n" viewBox="0 0 16 18"><path d="M.5.500h15v13h-5l-2.500 3-2.500-3h-5z" fill="none" stroke="#fff"/></svg>
    </div>
  </div>

  <div class="sogou">
    <svg class="sg-s" viewBox="0 0 24 24"><path d="M6 1l16-1c2 6 2 14 0 20L5 24C1 20 0 8 6 1z" fill="#ee4b1e"/><path d="M18 6.500H8v5h9v5.500H6" fill="none" stroke="#fff" stroke-width="3.400"/></svg>
    <span class="sg-a">A</span>
    <svg viewBox="0 0 16 16"><circle cx="4" cy="6" r="2" fill="#1a73d0"/><path d="M11 7c2 1 2 4-1 7" fill="none" stroke="#1a73d0" stroke-width="1.800"/></svg>
    <svg viewBox="0 0 16 16"><circle cx="8" cy="8" r="7" fill="none" stroke="#1a73d0" stroke-width="1.400"/><path d="M4 9c2 4 6 4 8 0" fill="none" stroke="#1a73d0"/><circle cx="5.500" cy="6" r="1" fill="#1a73d0"/><circle cx="10.500" cy="6" r="1" fill="#1a73d0"/></svg>
    <svg viewBox="0 0 16 16"><rect x="5" width="6" height="10" rx="3" fill="#1a73d0"/><path d="M2 7c0 7 12 7 12 0M8 13v3" fill="none" stroke="#1a73d0" stroke-width="1.400"/></svg>
    <svg viewBox="0 0 16 16"><rect x="0" y="2" width="16" height="12" rx="2" fill="#1a73d0"/><path d="M2 5h12M2 8h12M4 11h8" stroke="#fff" stroke-dasharray="1.500 1"/></svg>
    <svg viewBox="0 0 16 16"><circle cx="7" cy="5" r="4" fill="#aab4bd"/><path d="M0 15c0-5 14-5 14 0z" fill="#aab4bd"/><path d="M8 10h8v5H8z" fill="#fff" stroke="#aab4bd"/></svg>
    <svg viewBox="0 0 16 16"><path d="M5 1l3 1 3-1 5 3-2 4-2-1v8H4V7L2 8 0 4z" fill="#1a73d0"/></svg>
    <svg viewBox="0 0 16 16"><path d="M1 13l7-7c-1-3 2-6 6-5l-3 3 1 2 2 1 2-3c1 4-2 7-5 6l-7 7z" fill="#1a73d0"/></svg>
  </div>

  <div class="dialog" role="dialog">
    <div class="dlgtitle"><span>钢筋输入助手-梁下部钢筋</span><svg viewBox="0 0 12 12"><path d="M1 1l10 10M11 1L1 11" stroke="#222"/></svg></div>
    <div class="dlgvalue">4C25+2C20(-2)</div>
    <div class="dlgcols">
      <div class="col-l">
        <div class="dlglabel"><span class="m">1.</span>输入格式</div>
        <div class="listbox">
          <div class="li"><span class="m">4C16 </span>或<span class="m"> 2C22+2C25</span></div>
          <div class="li cursel"><span class="m">4C16 2/2 </span>或<span class="m"> 6C14 (-2)/4</span></div>
          <div class="lscroll"><i class="ch l"></i><i class="lthumb"></i><i class="ch r"></i></div>
        </div>
      </div>
      <div class="col-r">
        <div class="dlglabel"><span class="m">2.</span>输入说明</div>
        <div class="desc">当存在多排钢筋时，使用斜线"/"将各排<br>钢筋自上而下分开。当有下部钢筋不全<br>部伸入支座时，将不伸入的数量用(-数<br>量)的形式来表示。
          <i class="mark m1"></i><i class="mark m2"></i><i class="mark m3"></i></div>
      </div>
    </div>
    <div class="dlgbtns"><button class="ok">确定</button><button class="no">取消</button></div>
  </div>
</div>
</body>
</html>
```
FILE: styles.css
```css
*{box-sizing:border-box}
html,body{margin:0;padding:0;width:1366px;height:768px;overflow:hidden}
body{font:12px/16px "Noto Sans CJK SC","Noto Sans",sans-serif;color:#222;background:#fdfdfd}
.defs{position:absolute}
i,b{font-style:normal}
.app{position:relative;width:1366px;height:768px;display:flex;flex-direction:column}
.ic{width:16px;height:16px;flex:none}
.m{font-family:"Liberation Mono","Noto Sans CJK SC",monospace;font-size:11.5px;letter-spacing:-.9px}

.titlebar{height:24px;display:flex;align-items:center;padding-left:3px;background:#fff;flex:none}
.logo{width:16px;height:16px;margin-right:4px;flex:none}
.apptitle{color:#777;white-space:nowrap;letter-spacing:.36px}
.winctl{margin-left:auto;display:flex;align-items:center;padding-right:20px;gap:35px}
.winctl svg{width:10px;height:10px}
.winctl svg:first-child{width:11px}

.menubar{height:28px;flex:none;display:flex;align-items:center;background:#fdfdfd}
.menus{display:flex;align-items:center;gap:10.5px;padding-left:7px;width:937px;white-space:nowrap}
.menus .tool{gap:3px}
.menus .tool + .caret{margin:0 -2px 0 -5px}
.hint{width:188px;height:26px;background:#f7f7f7;border-radius:3px;color:#0b6f7a;padding:5px 0 0 29px;white-space:nowrap}
.userbox{flex:1;height:26px;margin-left:2px;background:#f7f7f7;display:flex;align-items:center;padding-left:3px;gap:4px;position:relative}
.big{width:18px;height:18px}
.num{letter-spacing:.05px}
.userbox .caret{margin:0 5px 0 4px}
.bell{width:13px;height:18px;margin-left:7px}
.more{font:bold 11px/10px "Liberation Sans",sans-serif;color:#222}
.userbox .more{position:absolute;right:5px;top:3px}

.row{display:flex;gap:2px;flex:none;white-space:nowrap}
.row2{height:31px;padding:2px 0 2px}
.strip{display:flex;align-items:center;gap:8px;background:#f6f6f6;height:100%;border-radius:2px}
.tool{display:inline-flex;align-items:center;gap:3px;flex:none}
.tool.off{color:#aaa}
.sigma{width:16px;text-align:center;font:bold 14px/16px "Liberation Serif",serif}
.caret{display:inline-block;width:0;height:0;border:3px solid transparent;border-top:4px solid #222;border-bottom:0;flex:none}
.strip > .caret{margin:0 -1px}
.strip > .caret.tight{margin-left:-6px}
.sep{width:1px;height:20px;background:#bdbdbd;flex:none;margin-right:-3px}
.grip{display:block;width:3px;height:17px;flex:none;background:radial-gradient(circle,#9a9a9a 1px,transparent 1.300px) 0 0/3px 4px}
.s-file{width:150px;padding-left:6px;gap:6px}
.s-file > .caret{margin:0}
.s-file .more{margin-left:18px}
.s-main{width:549px;margin-left:1px;padding-left:5px}
.s-main .more{margin-left:29px}
.s-view{flex:1;padding-left:4px;position:relative}
.more.end{position:absolute;right:3px;top:4px}
.whitebox{background:#fff;height:24px;padding:0 5px 0 2px;margin:0 -6px 0 -1px}

.work{flex:1;display:flex;min-height:0;height:621px}
.nav{width:165px;flex:none;display:flex;flex-direction:column;border-right:1px solid #a8a8a8;background:#f4f4f4}
.navhead{height:16px;border-top:1px solid #999;display:flex;align-items:center;gap:8px;padding-right:4px;background:#f0f0f0;margin-bottom:1px}
.navhead span{flex:1;line-height:14px}
.navhead svg{width:10px;height:11px}
.navbtn{height:22px;font:inherit;color:#222;background:#f0f0f0;border:1px solid #a8a8a8;border-width:1px 1px 1px 0;flex:none;padding:0}
.navbtn.pressed{background:#e6e6e6;border:2px solid #9a9a9a;border-left:0}
.treetools{height:27px;flex:none;display:flex;gap:7px;padding:6px 0 0 7px;background:#fff}
.treetools svg{width:16px;height:16px}
.tree{list-style:none;margin:0 0 0 3px;padding:2px 0 0;flex:1;background:#fff;border:1px solid #b8b8b8;font-size:12px;position:relative}
.tree li{height:16px;display:flex;align-items:center;white-space:nowrap;position:relative}
.rt{padding-left:8px}
.rt .ic{margin-right:5px;margin-left:-1px}
.kid{padding-left:31px}
.kid .ic{margin-right:5px}
.kid::before{content:"";position:absolute;left:30px;top:-8px;height:16px;border-left:1px dotted #777}
.kid::after{content:"";position:absolute;left:11px;top:-8px;height:16px;border-left:1px dotted #777}
.kid .dash{width:10px;border-top:1px dotted #777;margin-right:2px;flex:none}
.rt .dash{width:5px;border-top:1px dotted #777;margin:0 1px 0 2px;flex:none}
.chev{width:8px;height:8px;flex:none;border:solid #777;border-width:0 2px 2px 0;transform:rotate(-45deg) scale(.75);margin-left:-1px}
.chev.down{transform:rotate(45deg) scale(.85);margin-top:-4px;border-color:#333}
.sel{display:inline-flex;align-items:center;background:#cfcfcf;height:16px;width:57px;margin-left:-3px;padding-left:3px}
.sel .ic{margin-right:5px}
.cadic{width:15px;height:15px;margin-left:7px}
.newtag{font:bold 9px/9px "Liberation Sans",sans-serif;color:#222;background:#ffe21a;padding:0 1px;align-self:flex-start;margin-left:2px}

.mainpane{flex:1;min-width:0;padding-left:5px;display:flex;flex-direction:column;background:#fdfdfd;overflow:hidden;position:relative}
.row3{height:27px;padding:1px 0 1px 2px}
.row4{height:28px;padding:0 0 1px 2px}
.row5{height:29px;padding:2px 0 1px 2px}
.s-edit{width:789px;padding-left:1px}
.s-edit .tool:first-of-type{margin-left:-1px}
.s-comp{width:636px;padding-left:2px;gap:3px}
.s-comp .grip{margin-right:-2px}
.s-comp .sep{margin:0 1px 0 1px}
.s-comp .tool{margin-left:5px}
.s-comp .tool:nth-of-type(6){margin-left:0}
.combo{width:70px;height:24px;background:#fff;display:flex;align-items:center;justify-content:space-between;padding:0 3px;flex:none}
.w57{width:57px}
.s-axis{flex:none;width:423px;padding-left:1px}
.s-draw{width:1161px;padding-left:4px;position:relative}
.s-draw > .tool:first-of-type{gap:0;margin-left:-2px}
.combo.blank{width:57px;justify-content:flex-end;margin:0 -4px 0 -2px}
.s-draw .more.end{right:5px}
.tailgrip{flex:1;background:#fff;padding:5px 0 0 2px}
.tool.on{background:#dcebf8;border:1px solid #0078d7;height:24px;padding:0 3px}
.a1{margin:0 -5px 0 -4px}

.cad{display:block;flex:none}
.cadtxt text{font:16px "Liberation Mono",monospace;fill:#b8b8b8;stroke:#b8b8b8;stroke-width:.25}
.cadtxt .num{font:16px "Liberation Sans",sans-serif;fill:#9fb0b8;stroke:#9fb0b8}
.cadtxt .pink{fill:#b05cb0;stroke:#b05cb0}
.cadtxt .axisA{font:15px "Liberation Sans",sans-serif;fill:#d8d8d8;stroke:#d8d8d8}
.cadtxt .sm{font:10px "Liberation Mono","Noto Sans CJK SC",monospace;fill:#7c7c84;stroke:#7c7c84}
.cadtxt .vert{font:13px "Liberation Mono",monospace;fill:#aaa;stroke:#aaa}
.ax{font:14px "Liberation Sans",sans-serif}
.ax.g{fill:#0f0}.ax.r{fill:#f00}

.gutter{height:32px;flex:none;background:#f0f0f0;padding:2px 0 5px 215px}
.s-snap{width:365px;padding-left:1px;gap:3px;background:#f8f8f8}
.s-snap .tool:nth-of-type(1){margin:0 1px 0 1px}
.s-snap .tool.on{margin:0 -2px 0 0;padding:0 1px 0 4px}
.s-snap .tool:nth-of-type(4){margin-left:2px;gap:5px}
.s-snap .tool:nth-of-type(5){margin-left:5px}
.s-snap .grip{margin-left:4px}
.s-snap .grip:first-child{margin-left:0}
.snapc{width:58px;margin-left:2px;padding:0 2px}

.gridpane{flex:1;min-height:0;display:flex}
.griprail{width:12px;flex:none;background:#f0f0f0;padding-top:2px;display:flex;flex-direction:column;gap:2px}
.griprail svg{width:10px;height:10px;flex:none}
.railgrip{flex:1;width:8px;background:radial-gradient(circle,#bbb 1px,transparent 1.300px) 0 0/4px 4px}
.gridbody{flex:1;min-width:0;display:flex;flex-direction:column;position:relative;background:#fff;border-left:1px solid #b0b0b0}
.gridbar{height:28px;flex:none;margin-left:-1px;background:#fbfbfb;display:flex;align-items:center;padding-left:5px;gap:8px;white-space:nowrap}
.gridbar .tool{gap:4px}
.gridbar .plain{margin-left:2px}
.gridbar .off + .plain{margin-left:0}
.table{display:grid;grid-template-columns:32px 41px 81px 81px 81px 81px 81px 225px 82px 100px 72px 71px 40px 81px 35px;grid-template-rows:20px 19px 20px;flex:none;border-top:1px solid #b0b0b0;overflow:hidden;width:1184px}
.th{background:#fff;border-right:1px solid #c8c8c8;border-bottom:1px solid #c8c8c8;display:flex;align-items:center;justify-content:center;white-space:nowrap;line-height:16px}
.r2{grid-row:span 2}
.span3{grid-column:span 3}
.span2{grid-column:span 2}
.clip{justify-content:flex-start;padding-left:10px;border-right:0}
.hot{background:linear-gradient(#f9dc9c,#f3c165);color:#56127c}
.idx{background:#fbd48c;color:#56127c;text-align:center;line-height:20px;border-right:1px solid #c8c8c8}
.td{background:#a6caf0;border-right:1px solid #b8c8dc;border-bottom:1px solid #c8c8c8;padding:1px 0 0 1px;white-space:nowrap;overflow:hidden;display:flex;align-items:center}
.td u{text-decoration:underline;text-underline-offset:-1px}
.td.first{border-left:1px solid #111}
.td.cur{background:#8bbdec;border:3px solid #808080;border-width:2px 2px 3px;padding-left:0}
.hscroll{height:17px;margin-top:auto;margin-bottom:1px;background:#efefef;display:flex;align-items:center;border-bottom:1px solid #aaa;position:relative}
.thumb{position:absolute;left:456px;width:403px;top:0;bottom:0;background:#c9c9c9}
.ch{width:7px;height:7px;border:solid #555;border-width:2px 0 0 2px;transform:rotate(-45deg);position:absolute;top:5px}
.ch.l{left:6px}
.ch.r{right:6px;transform:rotate(135deg)}
.redbox{position:absolute;left:451px;top:53px;width:254px;height:63px;border:3px solid #f00;border-width:3px 4px}

.status{height:23px;flex:none;display:flex;gap:2px;padding:3px 0 1px 1px;background:#fff}
.cell{height:19px;background:#f4f4f4;border:1px solid #e2e2e2;white-space:nowrap;line-height:17px;padding-left:1px;flex:none;overflow:hidden}
.st1{width:147px}.st2{width:78px}.st3{width:99px}.st4{width:48px}.st5{width:913px}.st6{flex:1}

.taskbar{height:40px;flex:none;display:flex;background:#0c1a1f;color:#e8e8e8}
.start{width:48px;background:#000;display:flex;align-items:center;justify-content:center}
.start svg{width:16px;height:16px}
.search{width:344px;background:#f2f2f2;color:#333;font-size:13px;display:flex;align-items:center;padding-left:10px;gap:9px;position:relative}
.cortana{width:21px;height:21px;border-radius:50%;border:3px solid #111;flex:none}
.micro{position:absolute;right:14px;top:11px;width:12px;height:18px}
.tb{width:50px;display:flex;align-items:center;justify-content:center;position:relative}
.tb svg{width:22px;height:22px}
.tb.tv svg{width:16px;height:16px}
.tb.u::after{content:"";position:absolute;left:5px;right:5px;bottom:0;height:2px;background:#76b9ed}
.tb.active{background:#37474f}
.tb.active::after{content:"";position:absolute;left:0;right:0;bottom:0;height:2px;background:#76b9ed}
.tray{flex:1;position:relative;display:flex;align-items:center;padding-left:52px}
.t-p{width:16px;height:16px;flex:none}
.cpu{width:70px;margin-left:22px;text-align:center;line-height:18px;flex:none}
.t-c{width:12px;height:8px;margin-left:9px;flex:none}
.t-i{width:16px;height:16px;margin-left:9px;flex:none}
.t-k{width:22px;height:14px;margin-left:11px;flex:none}
.ime{font:17px "Liberation Sans",sans-serif;margin-left:11px;width:14px}
.t-s{width:16px;height:18px;margin-left:12px;flex:none}
.clock{width:70px;margin-left:23px;text-align:center;line-height:18px;flex:none}
.t-n{width:16px;height:18px;margin-left:10px;flex:none}

.sogou{position:absolute;left:702px;top:8px;width:185px;height:24px;background:#fff;border:1px solid #b5d3e6;display:flex;align-items:center;padding-left:12px;gap:7px}
.sogou svg{width:15px;height:16px;flex:none}
.sogou .sg-s{position:absolute;left:-19px;top:-3px;width:23px;height:25px}
.sg-a{font:18px "Liberation Sans",sans-serif;color:#1a73d0;width:14px}

.dialog{position:absolute;left:726px;top:229px;width:490px;height:291px;background:#f0f0f0;border:1px solid #3b8fd9;box-shadow:0 3px 14px rgba(0,0,0,.35);display:flex;flex-direction:column}
.dlgtitle{height:26px;background:#fff;display:flex;align-items:center;justify-content:space-between;padding:0 10px 0 3px;color:#333}
.dlgtitle svg{width:12px;height:12px}
.dlgvalue{margin:4px 8px 0 5px;height:28px;background:#fff;border:2px solid #999;text-align:center;font:bold 19px/25px "Liberation Serif",serif;color:#111;border-color:#909090 #a0a0a0 #a0a0a0 #909090}
.dlgcols{display:flex;height:190px;margin-top:9px;padding-left:5px}
.col-l{width:252px}
.col-r{margin-left:6px;width:218px}
.dlglabel{height:22px;line-height:20px;color:#222}
.col-r .dlglabel{padding-left:9px}
.listbox{position:relative;height:159px;border:2px solid #aaa;padding-top:1px;font-size:12px}
.li{height:16px;line-height:16px;padding-left:2px;white-space:pre;margin-top:1px}
.cursel{background:#c9dcec;margin-top:2px}
.lscroll{position:absolute;left:0;right:0;bottom:0;height:18px;border-top:1px solid #fff}
.lscroll .ch{top:6px;width:6px;height:6px}
.lthumb{position:absolute;left:17px;top:1px;width:17px;bottom:0;background:#ccc}
.desc{position:relative;height:159px;border:2px solid #aaa;padding:2px 0 0 1px;line-height:17px;white-space:nowrap;font-size:12px}
.mark{position:absolute;background:#f00}
.m1{left:118px;top:33px;width:88px;height:4px}
.m2{left:44px;top:51px;width:159px;height:3px}
.m3{left:4px;top:78px;width:104px;height:3px}
.dlgbtns{display:flex;padding:11px 0 0 316px;gap:34px}
.dlgbtns button{width:58px;height:20px;font:12px/14px "Noto Sans CJK SC",sans-serif;padding:0;color:#222}
.ok{background:#e1e1e1;border:2px solid #0078d7}
.no{background:#e1e1e1;border:2px solid #adadad}
```
